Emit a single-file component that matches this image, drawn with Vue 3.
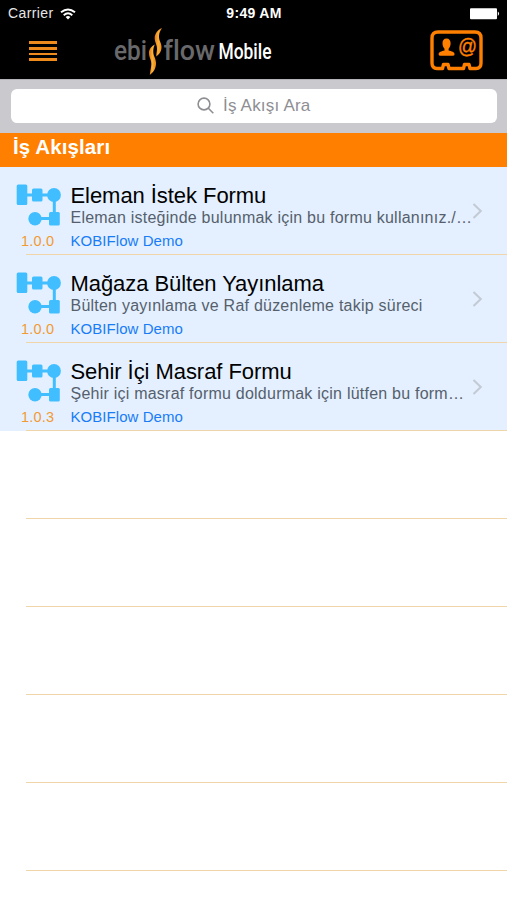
<script setup>
import { ref, computed } from 'vue'

const search = ref('')

const flows = ref([
  {
    id: 1,
    title: 'Eleman İstek Formu',
    // the list shows a shortened description
    description: 'Eleman isteğinde bulunmak için bu formu kullanınız./…',
    version: '1.0.0',
    owner: 'KOBIFlow Demo',
  },
  {
    id: 2,
    title: 'Mağaza Bülten Yayınlama',
    description: 'Bülten yayınlama ve Raf düzenleme takip süreci',
    version: '1.0.0',
    owner: 'KOBIFlow Demo',
  },
  {
    id: 3,
    title: 'Sehir İçi Masraf Formu',
    description: 'Şehir içi masraf formu doldurmak için lütfen bu form…',
    version: '1.0.3',
    owner: 'KOBIFlow Demo',
  },
])

const visibleFlows = computed(() => {
  const q = search.value.trim().toLocaleLowerCase('tr')
  return q ? flows.value.filter((f) => f.title.toLocaleLowerCase('tr').includes(q)) : flows.value
})

// Empty rows that fill up the table
const emptyRows = 5
</script>

<template>
  <div class="screen">
    <header class="header">
      <div class="status-bar">
        <div class="carrier">
          <span>Carrier</span>
          <svg class="wifi" width="16" height="12" viewBox="0 0 16 12">
            <g fill="none" stroke="#fff" stroke-width="1.9">
              <path d="M1 4.3Q8-1.5 15 4.3" />
              <path d="M3.7 7.2Q8 3.4 12.3 7.2" />
            </g>
            <path d="M5.6 9Q8 7 10.4 9L8 11.6Z" fill="#fff" />
          </svg>
        </div>
        <span class="time">9:49 AM</span>
        <svg class="battery" width="30" height="12" viewBox="0 0 30 12">
          <rect x="0" y="0.3" width="27" height="11" rx="1" fill="#fff" />
          <path d="M27.8 3.6Q30.4 5.8 27.8 8Z" fill="#fff" />
        </svg>
      </div>

      <div class="nav-bar">
        <button class="nav-button menu" aria-label="Menü">
          <span v-for="n in 4" :key="n" class="menu-line"></span>
        </button>

        <svg class="logo" width="200" height="50" viewBox="0 0 200 50">
          <defs>
            <linearGradient id="flame" x1="0" y1="0" x2="1" y2="0">
              <stop offset="0" stop-color="#e07a12" />
              <stop offset="0.5" stop-color="#fbb03a" />
              <stop offset="1" stop-color="#ea8516" />
            </linearGradient>
          </defs>
          <text class="logo-gray" x="3" y="34" textLength="33" lengthAdjust="spacingAndGlyphs">ebi</text>
          <text class="logo-gray" x="52.5" y="34" textLength="51.5" lengthAdjust="spacingAndGlyphs">flow</text>
          <text class="logo-white" x="107.5" y="33" textLength="53" lengthAdjust="spacingAndGlyphs">Mobile</text>
          <path
            fill="url(#flame)"
            d="M51 2C46.5 4 43.5 8 43.7 12.5C43.9 17 46.3 19 46 23.5C45.8 26 45.2 28 45.3 30.5C48.5 28 50.8 25 50.5 20.5C50.2 16.5 47.8 14.5 48 10C48.2 7 49.3 4.5 51 2Z"
          />
          <path
            fill="url(#flame)"
            d="M43.8 18.5C40 20.5 37.8 23.5 38 27.5C38.2 32 40.6 34 40.3 38.5C40 42.5 39.2 45 38.8 49C42.8 46 45.3 42 45 36.5C44.7 32 42.4 30 42.3 26C42.2 23 42.8 21 43.8 18.5Z"
          />
        </svg>

        <button class="nav-button contact" aria-label="Kişi kartı">
          <svg width="53" height="41" viewBox="0 0 53 41">
            <path
              fill="none"
              stroke="#ff8000"
              stroke-width="3.4"
              stroke-linejoin="round"
              d="M8 2H45Q51 2 51 8V33Q51 38.5 46 38.5H40L39 34.5H34.5L33.5 38.5H19L18 34.5H13.5L12.5 38.5H7Q2 38.5 2 33V8Q2 2 8 2Z"
            />
            <path
              fill="#ff8000"
              d="M16.5 8.5C13.7 8.5 12.4 10.5 12.5 13.5C12.6 16 13.4 17.6 14.5 18.7V20.5C11.5 21.2 8.6 22 8.6 24.3Q8.6 25.8 10.5 25.8H22.5Q24.6 25.8 24.6 24.3C24.6 22 21.6 21.2 18.6 20.5V18.7C19.7 17.6 20.5 16 20.6 13.5C20.7 10.5 19.3 8.5 16.5 8.5Z"
            />
            <text class="at" x="28" y="22.5" textLength="19" lengthAdjust="spacingAndGlyphs">@</text>
          </svg>
        </button>
      </div>
    </header>

    <div class="search-bar">
      <label class="search-field">
        <svg class="search-icon" width="18" height="18" viewBox="0 0 18 18">
          <circle cx="7" cy="7" r="5.9" />
          <path d="M11.3 11.3L16.3 16.3" />
        </svg>
        <input v-model="search" class="search-input" placeholder="İş Akışı Ara" />
      </label>
    </div>

    <h2 class="section-title">İş Akışları</h2>

    <ul class="list">
      <li v-for="flow in visibleFlows" :key="flow.id" class="row">
        <div class="row-left">
          <svg class="flow-icon" width="46" height="42" viewBox="0 0 46 42">
            <g stroke="#40beff" stroke-width="3">
              <path d="M8 11H38M38.3 11V34M20 34.5H38" />
            </g>
            <g fill="#40beff">
              <rect x="0.7" y="0.5" width="10.6" height="20.5" rx="1.5" />
              <rect x="16" y="4.5" width="10.5" height="13" rx="1.5" />
              <circle cx="38" cy="11" r="6.9" />
              <rect x="33" y="28" width="10.8" height="13.5" rx="1.5" />
              <circle cx="19" cy="34.7" r="6.7" />
            </g>
          </svg>
          <span class="version">{{ flow.version }}</span>
        </div>
        <div class="row-body">
          <div class="title">{{ flow.title }}</div>
          <div class="description">{{ flow.description }}</div>
          <div class="owner">{{ flow.owner }}</div>
        </div>
        <svg class="chevron" width="11" height="18" viewBox="0 0 11 18">
          <path d="M1.5 2L8.8 9L1.5 16" />
        </svg>
      </li>
      <li v-for="n in emptyRows" :key="`empty-${n}`" class="row empty"></li>
    </ul>
  </div>
</template>

<style>
body {
  margin: 0;
  background: #fff;
}
</style>

<style scoped>
.screen {
  height: 900px;
  overflow: hidden;
  background: #fff;
  font-family: 'Liberation Sans', Arial, sans-serif;
}

.header {
  height: 79px;
  background: #000;
  color: #fff;
}

.status-bar {
  display: grid;
  grid-template-columns: 1fr auto 1fr;
  align-items: center;
  height: 27px;
  padding: 0 7px 0 8px;
  font-size: 14px;
  line-height: 27px;
}
.carrier {
  display: flex;
  align-items: center;
  gap: 6px;
  letter-spacing: 0.4px;
  color: #e6e6e6;
}
.time {
  font-size: 14px;
  font-weight: bold;
  letter-spacing: 0.3px;
}
.battery {
  justify-self: end;
}

.nav-bar {
  display: flex;
  align-items: center;
  height: 48px;
  padding: 0 24px 0 29px;
}
.nav-button {
  padding: 0;
  border: 0;
  background: none;
}
.menu {
  display: flex;
  flex-direction: column;
  gap: 3px;
  width: 28px;
}
.menu-line {
  height: 2.6px;
  background: #ef8a1d;
}
.logo {
  margin-left: 54px;
}
.logo-gray {
  font: 500 28px Roboto, sans-serif;
  font-variant-ligatures: none;
  fill: #69696b;
}
.logo-white {
  font: 500 22px Roboto, sans-serif;
  fill: #fff;
}
.contact {
  display: flex;
  margin: -2px 0 0 auto;
}
.at {
  font: 20px 'Liberation Sans', sans-serif;
  fill: #ff8000;
  stroke: #ff8000;
  stroke-width: 0.4;
}

.search-bar {
  box-sizing: border-box;
  height: 54px;
  padding: 9px 10px 10px 11px;
  border-top: 1px solid #b4b4b8;
  background: #c9c9ce;
}
.search-field {
  display: flex;
  align-items: center;
  justify-content: center;
  gap: 8px;
  height: 34px;
  border-radius: 6px;
  background: #fff;
}
.search-icon {
  fill: none;
  stroke: #8e8e93;
  stroke-width: 1.6;
}
.search-input {
  width: 88px;
  padding: 0;
  border: 0;
  outline: 0;
  background: none;
  font: 17px 'Liberation Sans', Arial, sans-serif;
  letter-spacing: 0.2px;
}
.search-input::placeholder {
  color: #8e8e93;
}

.section-title {
  height: 34px;
  margin: 0;
  padding-left: 13px;
  background: #ff8000;
  color: #fff;
  font-size: 20.5px;
  font-weight: bold;
  line-height: 28px;
  letter-spacing: 0.1px;
}

.list {
  margin: 0;
  padding: 0;
  list-style: none;
}
.row {
  box-sizing: border-box;
  display: flex;
  height: 88px;
  padding-left: 16px;
  background:
    linear-gradient(#f0d5a8, #f0d5a8) 26px 87px / 100% 1px no-repeat,
    #e4f0ff;
}
.row.empty {
  background-color: #fff;
}
.row-left {
  display: flex;
  flex-direction: column;
  width: 54.5px;
  padding-top: 17px;
}
.version {
  margin: 6px 0 0 5px;
  color: #f29a32;
  font-size: 14.5px;
  line-height: 18px;
  letter-spacing: 0.2px;
}
.row-body {
  width: 401.5px;
  padding-top: 16px;
  white-space: nowrap;
}
.title {
  color: #000;
  font-size: 22px;
  line-height: 26px;
  letter-spacing: -0.06px;
}
.description {
  color: #56606c;
  font-size: 16px;
  line-height: 18px;
  letter-spacing: 0.23px;
}
.owner {
  margin-top: 5px;
  color: #187cf7;
  font-size: 15px;
  line-height: 18px;
  letter-spacing: 0.05px;
}
.chevron {
  margin-top: 35px;
  fill: none;
  stroke: #c3cad3;
  stroke-width: 2;
}
</style>
